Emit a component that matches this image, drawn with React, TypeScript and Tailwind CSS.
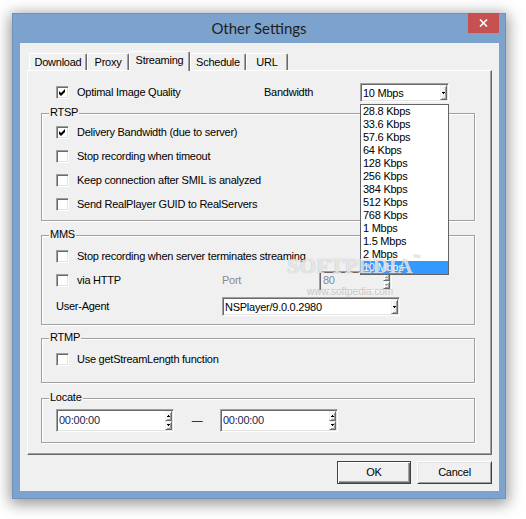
import React from "react";

const sunken =
  "border border-t-[#a0a0a0] border-l-[#a0a0a0] border-b-white border-r-white shadow-[inset_1px_1px_0_#696969,inset_-1px_-1px_0_#e3e3e3]";
const raisedSmall =
  "border border-t-[#f0f0f0] border-l-[#f0f0f0] border-b-[#696969] border-r-[#696969] shadow-[inset_1px_1px_0_#fff,inset_-1px_-1px_0_#a0a0a0] bg-[#f0f0f0]";

function DownArrow({ color = "#000" }: { color?: string }) {
  return (
    <svg width="3" height="2" viewBox="0 0 3 2" className="block">
      <rect x="0" y="0" width="3" height="1" fill={color} />
      <rect x="1" y="1" width="1" height="1" fill={color} />
    </svg>
  );
}
function UpArrow({ color = "#000" }: { color?: string }) {
  return (
    <svg width="3" height="2" viewBox="0 0 3 2" className="block">
      <rect x="1" y="0" width="1" height="1" fill={color} />
      <rect x="0" y="1" width="3" height="1" fill={color} />
    </svg>
  );
}

function Check({ checked }: { checked?: boolean }) {
  return (
    <span
      className={`flex h-[13px] w-[13px] shrink-0 items-center justify-center bg-white ${sunken}`}
    >
      {checked && (
        <svg width="9" height="9" viewBox="0 0 9 9" className="block">
          <polygon points="1,3 3,5 7,1 7,4 3,8 1,6" fill="#000" />
        </svg>
      )}
    </span>
  );
}

function CheckRow({ label, checked, className = "" }: { label: string; checked?: boolean; className?: string }) {
  return (
    <div className={`flex h-[13px] items-center gap-[8px] ${className}`}>
      <Check checked={checked} />
      <span className="whitespace-nowrap">{label}</span>
    </div>
  );
}

function Group({ title, className, children }: { title: string; className: string; children: React.ReactNode }) {
  return (
    <div
      className={`relative w-[434px] border border-[#a0a0a0] shadow-[inset_1px_1px_0_#fff,1px_1px_0_#fff] ${className}`}
    >
      <span className="absolute left-[7px] top-[-8px] bg-[#f0f0f0] px-[1px] leading-[13px]">{title}</span>
      {children}
    </div>
  );
}

function Combo({ value, width }: { value: string; width: string }) {
  return (
    <div className={`flex h-[19px] items-stretch bg-white ${sunken} ${width}`}>
      <div className="flex flex-1 items-center pl-[2px] pt-[1px]">{value}</div>
      <div className={`my-[1px] mr-[1px] flex w-[7px] items-center justify-center ${raisedSmall}`}>
        <DownArrow />
      </div>
    </div>
  );
}

function Spinner({ disabled }: { disabled?: boolean }) {
  const c = disabled ? "#a0a0a0" : "#000";
  return (
    <div className="my-[1px] mr-[1px] flex w-[7px] flex-col">
      <div className={`flex flex-1 items-center justify-center ${raisedSmall}`}>
        <UpArrow color={c} />
      </div>
      <div className={`flex flex-1 items-center justify-center ${raisedSmall}`}>
        <DownArrow color={c} />
      </div>
    </div>
  );
}

function TimeField() {
  return (
    <div className={`flex h-[23px] w-[118px] items-stretch bg-white ${sunken}`}>
      <div className="flex flex-1 items-center pl-[2px] text-[#1b2550]">00:00:00</div>
      <Spinner />
    </div>
  );
}

function Tab({ label, w, selected }: { label: string; w: string; selected?: boolean }) {
  if (selected) {
    return (
      <div
        className={`relative z-10 -mb-[1px] flex h-[20px] items-start justify-center rounded-t-[2px] border-l border-t border-r border-l-white border-t-white border-r-[#696969] bg-[#f0f0f0] pt-[2px] shadow-[inset_-1px_0_0_#a0a0a0] ${w}`}
      >
        {label}
      </div>
    );
  }
  return (
    <div
      className={`flex h-[17px] items-center justify-center rounded-t-[2px] border-l border-t border-r border-l-white border-t-white border-r-[#696969] bg-[#f0f0f0] pt-[1px] shadow-[inset_-1px_0_0_#a0a0a0] ${w}`}
    >
      {label}
    </div>
  );
}

const speeds = [
  "28.8 Kbps",
  "33.6 Kbps",
  "57.6 Kbps",
  "64 Kbps",
  "128 Kbps",
  "256 Kbps",
  "384 Kbps",
  "512 Kbps",
  "768 Kbps",
  "1 Mbps",
  "1.5 Mbps",
  "2 Mbps",
  "10 Mbps",
];

export default function App() {
  return (
    <div className="min-h-[519px] w-[526px] bg-white pl-[12px] pt-[13px] font-['Liberation_Sans',Arial,sans-serif] text-[11px] leading-[13px] tracking-[-0.25px] text-black">
      <div className="relative flex h-[486px] w-[494px] flex-col border border-[#6e92ba] bg-[#7ca3cd] shadow-[0_3px_14px_2px_rgba(0,0,0,0.42)]">
        {/* Title bar */}
        <div className="flex h-[29px] items-center justify-center pb-[1px]">
          <span className="font-['Lato','Noto_Sans',sans-serif] text-[15px] leading-[18px] tracking-normal text-[#1e1e1e]">
            Other Settings
          </span>
        </div>
        <div className="absolute right-[6px] top-[-1px] flex h-[20px] w-[31px] items-center justify-center bg-[#c75050]">
          <svg width="9" height="8" viewBox="0 0 9 8" className="block">
            <path d="M1 0.5 L8 7.5 M8 0.5 L1 7.5" stroke="#fff" strokeWidth="1.6" />
          </svg>
        </div>

        {/* Client area */}
        <div className="mb-[7px] ml-[7px] mr-[6px] flex h-[448px] flex-col bg-[#f0f0f0] px-[7px] pb-[7px] pt-[8px]">
          {/* Tabs */}
          <div className="flex h-[19px] items-end pl-[2px]">
            <Tab label="Download" w="w-[58px]" />
            <Tab label="Proxy" w="w-[42px]" />
            <Tab label="Streaming" w="w-[61px]" selected />
            <Tab label="Schedule" w="w-[56px]" />
            <Tab label="URL" w="w-[42px]" />
          </div>

          {/* Panel */}
          <div className="flex h-[385px] flex-col border border-b-[#696969] border-l-white border-r-[#696969] border-t-white pl-[13px] pt-[12px] shadow-[inset_-1px_-1px_0_#a0a0a0]">
            {/* Top row */}
            <div className="relative z-20 flex h-[19px] items-center pl-[15px]">
              <CheckRow label="Optimal Image Quality" checked className="w-[208px]" />
              <span className="w-[96px]">Bandwidth</span>
              <div className="relative">
                <Combo value="10 Mbps" width="w-[89px]" />
                <div className="absolute left-0 top-[21px] w-[89px] border border-[#646464] bg-white">
                  {speeds.map((s, i) => (
                    <div
                      key={s}
                      className={`h-[13px] pl-[2px] leading-[13px] ${
                        i === speeds.length - 1 ? "bg-[#3399ff] text-white" : ""
                      }`}
                    >
                      {s}
                    </div>
                  ))}
                </div>
              </div>
            </div>

            {/* RTSP */}
            <Group title="RTSP" className="mt-[11px] h-[108px]">
              <div className="flex flex-col gap-[11px] pl-[14px] pt-[12px]">
                <CheckRow label="Delivery Bandwidth (due to server)" checked />
                <CheckRow label="Stop recording when timeout" />
                <CheckRow label="Keep connection after SMIL is analyzed" />
                <CheckRow label="Send RealPlayer GUID to RealServers" />
              </div>
            </Group>

            {/* MMS */}
            <Group title="MMS" className="mt-[14px] h-[90px]">
              <div className="flex flex-col pl-[14px] pt-[14px]">
                <CheckRow label="Stop recording when server terminates streaming" />
                <div className="mt-[8px] flex h-[19px] items-center">
                  <CheckRow label="via HTTP" className="w-[166px]" />
                  <span className="w-[97px] text-[#8a8a8a]">Port</span>
                  <div className={`flex h-[20px] w-[73px] items-stretch bg-[#f0f0f0] ${sunken}`}>
                    <div className="flex flex-1 items-center pl-[3px] text-[#7f8ba0]">80</div>
                    <Spinner disabled />
                  </div>
                </div>
                <div className="mt-[7px] flex h-[19px] items-center">
                  <span className="w-[166px]">User-Agent</span>
                  <Combo value="NSPlayer/9.0.0.2980" width="w-[178px]" />
                </div>
              </div>
            </Group>

            {/* RTMP */}
            <Group title="RTMP" className="mt-[13px] h-[45px]">
              <div className="pl-[14px] pt-[14px]">
                <CheckRow label="Use getStreamLength function" />
              </div>
            </Group>

            {/* Locate */}
            <Group title="Locate" className="mt-[15px] h-[45px]">
              <div className="flex items-center pl-[14px] pt-[10px]">
                <TimeField />
                <div className="flex w-[46px] justify-center">—</div>
                <TimeField />
              </div>
            </Group>
          </div>

          {/* Buttons */}
          <div className="mt-[6px] flex justify-end gap-[6px]">
            <button className="flex h-[23px] w-[74px] items-center justify-center border border-[#404040] bg-[#f0f0f0] shadow-[inset_1px_1px_0_#fff,inset_-1px_-1px_0_#696969,inset_-2px_-2px_0_#a0a0a0]">
              OK
            </button>
            <button className="flex h-[23px] w-[75px] items-center justify-center border border-b-[#404040] border-l-white border-r-[#404040] border-t-white bg-[#f0f0f0] shadow-[inset_1px_1px_0_#e3e3e3,inset_-1px_-1px_0_#a0a0a0]">
              Cancel
            </button>
          </div>
        </div>

        {/* Watermark */}
        <div className="pointer-events-none absolute left-[274px] top-[240px] z-30 font-['Liberation_Serif',serif] text-[22px] font-bold leading-[24px] tracking-normal text-white/70 [text-shadow:0_0_1px_rgba(120,120,120,0.6)]">
          SOFTPEDIA<span className="align-top text-[8px] leading-[8px]">™</span>
        </div>
        <div className="pointer-events-none absolute left-[294px] top-[273px] z-30 text-[10px] leading-[10px] tracking-normal text-[#c8c8c8]">
          www.softpedia.com
        </div>
      </div>
    </div>
  );
}
